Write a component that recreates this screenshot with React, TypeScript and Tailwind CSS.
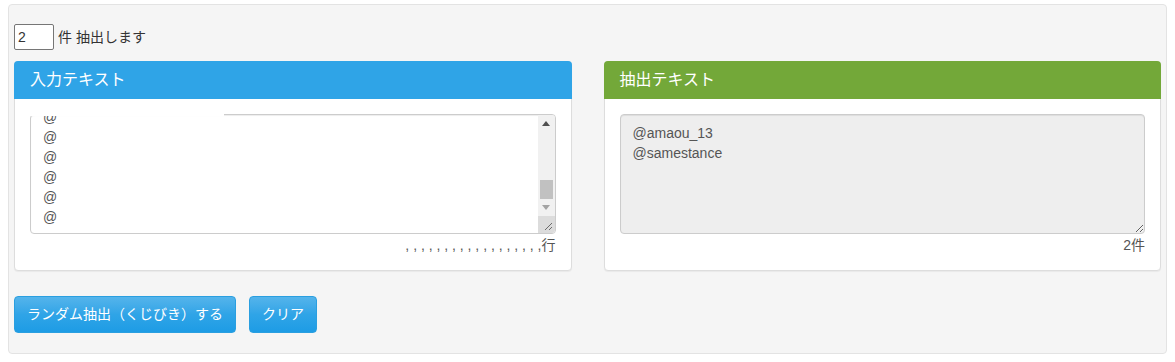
import { useEffect, useRef } from "react";

const inputLines = Array.from({ length: 24 }, () => "@").join("\n");
const lineDots = Array.from({ length: 18 }, () => ",").join(" ");

function FakeScrollbar() {
    return (
        <div className="absolute bottom-[1px] right-[1px] top-[1px] flex w-[17px] flex-col rounded-br-[3px] rounded-tr-[3px] bg-[#f1f1f1]">
            <div className="flex h-[17px] items-center justify-center">
                <svg width="8" height="5" viewBox="0 0 8 5">
                    <path d="M4 0 L8 5 L0 5 Z" fill="#505050" />
                </svg>
            </div>
            <div className="flex flex-1 flex-col justify-end px-[2px]">
                <div className="h-[19px] bg-[#c1c1c1]" />
            </div>
            <div className="flex h-[17px] items-center justify-center">
                <svg width="8" height="5" viewBox="0 0 8 5">
                    <path d="M0 0 L8 0 L4 5 Z" fill="#a3a3a3" />
                </svg>
            </div>
            <div className="relative h-[17px] rounded-br-[3px] bg-[#dcdcdc]">
                <svg className="absolute bottom-[2px] right-[2px]" width="10" height="10" viewBox="0 0 10 10">
                    <path d="M9 2 L2 9 M9 6 L6 9" stroke="#6b6b6b" strokeWidth="1" />
                </svg>
            </div>
        </div>
    );
}

export default function App() {
    const leftRef = useRef<HTMLTextAreaElement>(null);

    useEffect(() => {
        // the list is long, show its tail like the original page does
        if (leftRef.current) {
            leftRef.current.scrollTop = leftRef.current.scrollHeight;
        }
    }, []);

    return (
        <div
            className="px-[8px] pt-[4px] text-[14px] text-[#555]"
            style={{ fontFamily: '"Liberation Sans", "Noto Sans CJK JP", sans-serif' }}
        >
            <div className="rounded-[4px] border border-[#e3e3e3] bg-[#f5f5f5] px-[5px] pb-[20px] pt-[19px]">
                {/* count row */}
                <div className="flex items-center gap-[4px]">
                    <input
                        type="text"
                        defaultValue="2"
                        className="h-[26px] w-[40px] rounded-[2px] border border-[#767676] bg-white px-[3px] text-[14px] text-[#333] outline-none"
                    />
                    <span className="text-[14px] text-[#333]">件 抽出します</span>
                </div>

                <div className="mt-[11px] grid grid-cols-2 gap-[32px]">
                    {/* input panel */}
                    <div className="rounded-[4px] border border-[#ddd] bg-white shadow-[0_1px_1px_rgba(0,0,0,0.05)]">
                        <div className="-mx-px -mt-px h-[38px] rounded-t-[4px] bg-[#2fa4e7] px-[16px] pt-[10px] text-[16px] leading-[18px] text-white">
                            入力テキスト
                        </div>
                        <div className="px-[15px] pb-[15px] pt-[15px]">
                            <div className="relative">
                                <textarea
                                    ref={leftRef}
                                    readOnly
                                    defaultValue={inputLines}
                                    className="block h-[120px] w-full resize-none overflow-hidden rounded-[4px] border border-[#ccc] bg-white px-[12px] py-[6px] text-[14px] leading-[20px] text-[#555] shadow-[inset_0_1px_1px_rgba(0,0,0,0.075)] outline-none"
                                />
                                {/* masked strip on the top edge */}
                                <div className="absolute left-0 top-0 h-[2px] w-[194px] bg-white" />
                                <FakeScrollbar />
                            </div>
                            <div className="mt-[1px] text-right text-[14px] leading-[20px] text-[#555]">
                                {lineDots}行
                            </div>
                        </div>
                    </div>

                    {/* output panel */}
                    <div className="rounded-[4px] border border-[#ddd] bg-white shadow-[0_1px_1px_rgba(0,0,0,0.05)]">
                        <div className="-mx-px -mt-px h-[38px] rounded-t-[4px] bg-[#73a839] px-[16px] pt-[10px] text-[16px] leading-[18px] text-white">
                            抽出テキスト
                        </div>
                        <div className="px-[15px] pb-[15px] pt-[15px]">
                            <textarea
                                readOnly
                                defaultValue={"@amaou_13\n@samestance"}
                                className="block h-[120px] w-full resize-y rounded-[4px] border border-[#ccc] bg-[#eee] px-[12px] pb-[6px] pt-[8px] text-[14px] leading-[20px] text-[#555] shadow-[inset_0_1px_1px_rgba(0,0,0,0.075)] outline-none"
                            />
                            <div className="mt-[1px] text-right text-[14px] leading-[20px] text-[#555]">
                                2件
                            </div>
                        </div>
                    </div>
                </div>

                {/* actions */}
                <div className="mt-[25px] flex gap-[13px]">
                    <button className="h-[37px] rounded-[4px] border border-[#2a9fe0] bg-gradient-to-b from-[#54b4eb] via-[#2fa4e7] to-[#1d9ce5] px-[12px] text-[14px] text-white">
                        ランダム抽出（くじびき）する
                    </button>
                    <button className="h-[37px] rounded-[4px] border border-[#2a9fe0] bg-gradient-to-b from-[#54b4eb] via-[#2fa4e7] to-[#1d9ce5] px-[12px] text-[14px] text-white">
                        クリア
                    </button>
                </div>
            </div>
        </div>
    );
}
